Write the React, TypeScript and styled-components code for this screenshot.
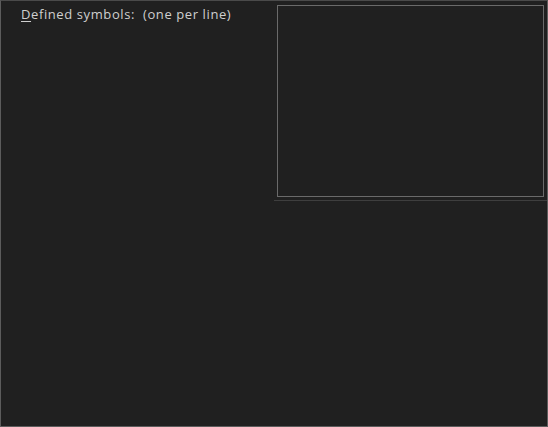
import React from "react";
import styled, { createGlobalStyle } from "styled-components";

const GlobalStyle = createGlobalStyle`
  html, body {
    margin: 0;
    padding: 0;
    background: #202020;
  }
`;

const App = () => {
  return (
    <>
      <GlobalStyle />
      <Window>
        <LabelColumn>
          <Label>
            <AccessKey>D</AccessKey>efined symbols:&nbsp;&nbsp;(one per line)
          </Label>
        </LabelColumn>
        <SidePanel>
          <SymbolsBox />
          <Separator />
        </SidePanel>
      </Window>
    </>
  );
};

export default App;

const Window = styled.div`
  box-sizing: border-box;
  width: 548px;
  height: 427px;
  background: #202020;
  border: 1px solid #5c5c5c;
  border-top-color: #4a4a4a;
  display: grid;
  grid-template-columns: 1fr 273px;
  align-items: start;
`;

const LabelColumn = styled.div`
  padding: 4px 0 0 20px;
`;

const Label = styled.div`
  font-family: "Open Sans", "Noto Sans", sans-serif;
  font-size: 13px;
  line-height: 18px;
  letter-spacing: 0.6px;
  color: #cfcfcf;
  white-space: nowrap;
`;

const AccessKey = styled.span`
  text-decoration: underline;
  text-underline-offset: 2px;
`;

const SidePanel = styled.div`
  display: flex;
  flex-direction: column;
  padding-top: 4px;
`;

const SymbolsBox = styled.div`
  box-sizing: border-box;
  height: 192px;
  margin: 0 3px;
  border: 1px solid #6a6a6a;
  background: #202020;
`;

const Separator = styled.div`
  height: 1px;
  margin-top: 3px;
  background: #3e3e3e;
`;
